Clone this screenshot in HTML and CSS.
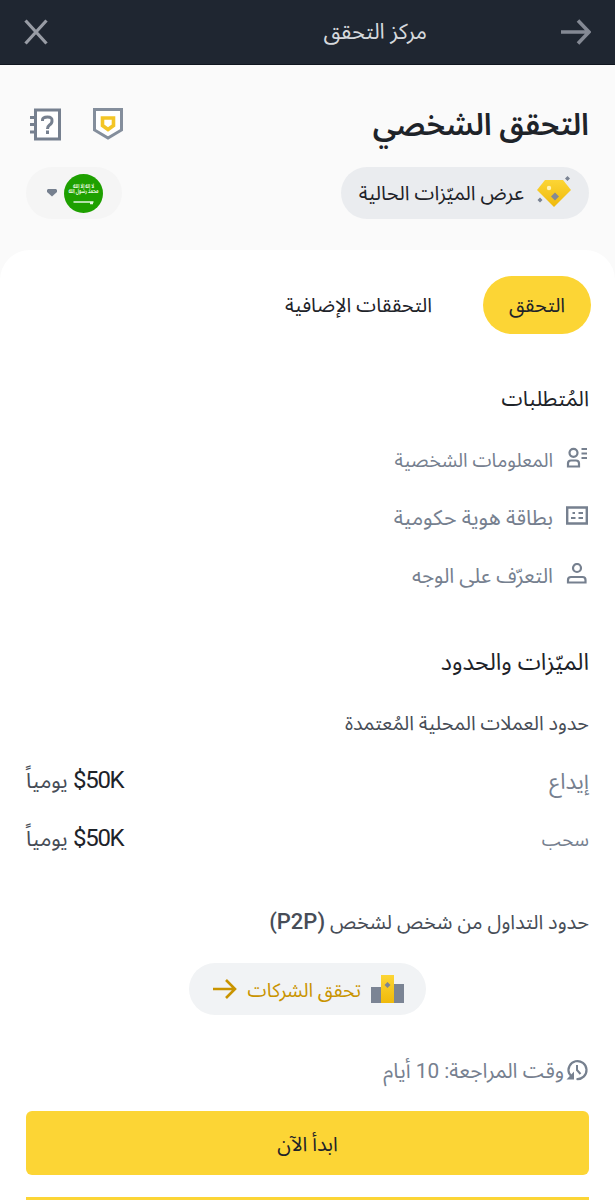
FILE: index.html
```
<!DOCTYPE html>
<html lang="ar" dir="rtl">
<head>
    <meta charset="UTF-8">
    <meta name="viewport" content="width=device-width, initial-scale=1.0">
    <title>مركز التحقق</title>
    <link rel="stylesheet" href="styles.css">
</head>
<body>
    <header class="topbar">
        <svg class="back" width="30" height="28" viewBox="0 0 30 28">
            <path d="M0 14H27M17 2.500L28 14L17 25.500" fill="none" stroke="#848994" stroke-width="3.600"/>
        </svg>
        <h1>مركز التحقق</h1>
        <svg class="close" width="24" height="28" viewBox="0 0 24 28">
            <path d="M1.500 2.500L22.500 25.500M22.500 2.500L1.500 25.500" fill="none" stroke="#989ca5" stroke-width="3.200"/>
        </svg>
    </header>
    <section class="intro">
        <div class="intro-row">
            <h2>التحقق الشخصي</h2>
            <div class="intro-icons">
                <svg width="30" height="32" viewBox="0 0 30 32">
                    <path d="M1.500 1.500H28.500V22L15 30L1.500 22Z" fill="#fff" stroke="#848e9c" stroke-width="3"/>
                    <path d="M9.500 10H20.500V17.500L15 21.500L9.500 17.500Z" fill="#fff" stroke="#f3c526" stroke-width="3.600"/>
                </svg>
                <svg width="31" height="33" viewBox="0 0 31 33">
                    <path d="M5.500 2H29.500V31H5.500Z" fill="#fff" stroke="#76808f" stroke-width="3"/>
                    <path d="M0 9.500H5M0 16.500H5M0 24H5" stroke="#76808f" stroke-width="3"/>
                    <path d="M12.500 13V12Q12.500 9 17.500 9T22 13Q22 15.500 19.500 17Q17.500 18.500 17.500 21M17.500 22.500V26" fill="none" stroke="#76808f" stroke-width="3"/>
                </svg>
            </div>
        </div>
        <div class="intro-row">
            <div class="pill benefits">
                <svg width="36" height="34" viewBox="0 0 36 34">
                    <defs>
                        <linearGradient id="gold" x1="0" y1="0" x2="0" y2="1">
                            <stop offset="0" stop-color="#fcd535"/>
                            <stop offset="1" stop-color="#efb90b"/>
                        </linearGradient>
                    </defs>
                    <path d="M9 4H27L35 14L18 31L1 14Z" fill="url(#gold)"/>
                    <path d="M19 16.500L23 20.500L19 24.500L15 20.500Z" fill="#848994"/>
                    <path d="M31.500 0L34 2.500L31.500 5L29 2.500ZM4 21.500L6.500 24L4 26.500L1.500 24Z" fill="#7b8494"/>
                    <circle cx="13" cy="12" r="2.200" fill="#fff3b5"/>
                </svg>
                <span>عرض الميّزات الحالية</span>
            </div>
            <div class="pill country">
                <svg width="39" height="39" viewBox="0 0 39 39">
                    <circle cx="19.500" cy="19.500" r="19.500" fill="#1ea000"/>
                    <g transform="translate(19.500 0) scale(.72 1)">
                        <text class="flag-text" x="0" y="14.500" text-anchor="middle">لا إله إلا الله</text>
                        <text class="flag-text" x="0" y="19" text-anchor="middle">محمد رسول الله</text>
                    </g>
                    <path d="M9.500 28H29.500M26 29.500H29" stroke="#e3f5df" stroke-width="1.300"/>
                </svg>
                <svg width="10" height="8" viewBox="0 0 10 8">
                    <path d="M0 1L1 0H9L10 1V3L5 7.500L0 3Z" fill="#76808f"/>
                </svg>
            </div>
        </div>
    </section>
    <main class="sheet">
        <nav class="tabs">
            <span class="tab active">التحقق</span>
            <span class="tab">التحققات الإضافية</span>
        </nav>
        <h3 class="req-title">المُتطلبات</h3>
        <ul class="requirements">
            <li>
                <svg width="22" height="22" viewBox="0 0 22 22">
                    <path d="M2 19.500V16.500Q2 13.500 5 13.500H10Q13 13.500 13 16.500V19.500Z" fill="none" stroke="#76808f" stroke-width="2.200"/>
                    <circle cx="7.500" cy="5.800" r="4" fill="none" stroke="#76808f" stroke-width="2.200"/>
                    <path d="M15.500 2H21M15.500 6.500H21M15.500 11H21" stroke="#76808f" stroke-width="2"/>
                </svg>
                <span class="req-info">المعلومات الشخصية</span>
            </li>
            <li>
                <svg width="22" height="22" viewBox="0 0 22 22">
                    <path d="M1.200 2.500H20.800V18.500H1.200Z" fill="none" stroke="#76808f" stroke-width="2.400"/>
                    <path d="M6.500 8H9M12.500 8H17M5 13H9.500M12.500 13H17" stroke="#76808f" stroke-width="2"/>
                </svg>
                <span class="req-id">بطاقة هوية حكومية</span>
            </li>
            <li>
                <svg width="22" height="22" viewBox="0 0 22 22">
                    <path d="M2 19.500V17Q2 14 5 14H16.500Q19.500 14 19.500 17V19.500Z" fill="none" stroke="#76808f" stroke-width="2.200"/>
                    <circle cx="11" cy="5" r="4" fill="none" stroke="#76808f" stroke-width="2.200"/>
                </svg>
                <span class="req-face">التعرّف على الوجه</span>
            </li>
        </ul>
        <h3 class="limits-title">الميّزات والحدود</h3>
        <h4 class="fiat">حدود العملات المحلية المُعتمدة</h4>
        <div class="limit">
            <span class="limit-name">إيداع</span>
            <span class="limit-value"><b dir="ltr">$50K</b> يومياً</span>
        </div>
        <div class="limit">
            <span class="limit-name withdraw">سحب</span>
            <span class="limit-value"><b dir="ltr">$50K</b> يومياً</span>
        </div>
        <h4 class="p2p">حدود التداول من شخص لشخص <b dir="ltr">(P2P)</b></h4>
        <div class="pill company">
            <svg width="33" height="29" viewBox="0 0 33 29">
                <path d="M0 12H11V28H0ZM22 9H33V28H22Z" fill="#7b8494"/>
                <path d="M10 0H23V28H10Z" fill="url(#gold)"/>
                <path d="M16.500 7L19.500 10L16.500 13L13.500 10Z" fill="#7b8494"/>
            </svg>
            <span>تحقق الشركات</span>
            <svg width="24" height="20" viewBox="0 0 24 20">
                <path d="M0 10H22M13 1L22 10L13 19" fill="none" stroke="#c99400" stroke-width="2.600"/>
            </svg>
        </div>
        <div class="review">
            <svg width="22" height="22" viewBox="0 0 22 22">
                <path d="M10.500 20A9 9 0 1 0 3.200 14.500L6 18" fill="none" stroke="#76808f" stroke-width="2.200"/>
                <path d="M8 12.500V20.500H0.500Z" fill="#76808f"/>
                <path d="M11 6V11L14.500 15" fill="none" stroke="#76808f" stroke-width="2"/>
            </svg>
            <span>وقت المراجعة: 10 أيام</span>
        </div>
        <button class="start"><span>ابدأ الآن</span></button>
        <div class="next"></div>
    </main>
</body>
</html>
```

FILE: styles.css
```
* {
    box-sizing: border-box;
    margin: 0;
    padding: 0;
}
body {
    height: 1200px;
    overflow: hidden;
    background-color: #fafafa;
    color: #1e2329;
    font-family: Roboto, "Noto Sans Arabic", "Noto Sans", sans-serif;
    font-size: 20px;
}
h1, h2, h3, h4 {
    font-weight: normal;
}
svg {
    display: block;
    flex-shrink: 0;
}
span, h1, h2, h3, h4 {
    white-space: nowrap;
}
.topbar {
    display: flex;
    align-items: center;
    height: 65px;
    padding: 0 24px;
    background-color: #1f2631;
    border-bottom: 1px solid #10161f;
}
.topbar h1 {
    margin-right: 134px;
    font-size: 21.8px;
    color: #d5d8dc;
}
.close {
    margin-right: auto;
}
.intro {
    height: 185px;
    padding: 35px 26px 0;
}
.intro-row {
    display: flex;
    align-items: center;
    justify-content: space-between;
    height: 48px;
}
.intro-row + .intro-row {
    height: 52px;
    margin-top: 19px;
}
.intro h2 {
    padding-top: 2px;
    font-size: 30.5px;
    font-weight: 600;
}
.intro-icons {
    display: flex;
    align-items: center;
    gap: 32px;
    padding-left: 4px;
}
.pill {
    display: flex;
    align-items: center;
    height: 52px;
    border-radius: 26px;
}
.pill span {
    padding-top: 2px;
}
.benefits {
    width: 248px;
    padding-right: 17px;
    gap: 12px;
    background-color: #eaecef;
}
.country {
    width: 96px;
    padding-right: 19px;
    gap: 7px;
    background-color: #f5f5f5;
}
.flag-text {
    font-size: 6px;
    font-weight: bold;
    fill: #e3f5df;
}
.sheet {
    height: 950px;
    padding: 26px 26px 0;
    background-color: #fff;
    border-radius: 30px 30px 0 0;
}
.tabs {
    display: flex;
    align-items: center;
    gap: 51px;
    height: 58px;
    margin-right: -2px;
}
.tab {
    padding-top: 2px;
}
.tab.active {
    display: flex;
    align-items: center;
    justify-content: center;
    width: 108px;
    height: 58px;
    border-radius: 29px;
    background-color: #fcd535;
}
h3 {
    height: 36px;
    line-height: 36px;
    font-size: 21.4px;
}
.req-title {
    margin-top: 47px;
}
.requirements {
    margin-top: 12px;
    list-style: none;
    color: #76808f;
}
.requirements li {
    display: flex;
    align-items: center;
    gap: 13px;
    height: 58px;
    padding-right: 1px;
}
.requirements span {
    padding-top: 4px;
}
.req-info {
    font-size: 19.3px;
}
.req-id {
    font-size: 21.3px;
}
.req-face {
    font-size: 20.7px;
}
.limits-title {
    margin-top: 41px;
    font-size: 23.4px;
}
h4 {
    height: 30px;
    line-height: 30px;
    font-size: 19.8px;
    color: #474d57;
}
.fiat {
    margin: 29px 0 12px;
}
.limit {
    display: flex;
    align-items: center;
    justify-content: space-between;
    height: 58px;
}
.limit-name {
    padding-top: 3px;
    font-size: 22px;
    color: #76808f;
}
.limit-name.withdraw {
    font-size: 18.8px;
}
.limit-value {
    padding-top: 2px;
    font-size: 21.3px;
    color: #474d57;
}
.limit-value b {
    font-size: 24px;
    font-weight: normal;
    letter-spacing: -1.3px;
    color: #1e2329;
}
.p2p {
    margin-top: 40px;
    font-size: 20px;
}
.p2p b {
    font-size: 22px;
    font-weight: 500;
}
.company {
    width: 237px;
    margin: 26px auto 0;
    padding-right: 22px;
    gap: 10px;
    background-color: #f1f3f5;
    color: #c99400;
    font-size: 19.3px;
}
.review {
    display: flex;
    align-items: center;
    gap: 2px;
    height: 30px;
    margin: 40px 0 26px;
    padding-right: 1px;
    color: #76808f;
    font-size: 20.8px;
}
.review span {
    padding-top: 2px;
}
.start {
    display: block;
    width: 100%;
    height: 64px;
    margin-bottom: 22px;
    padding-top: 4px;
    border: none;
    border-radius: 6px;
    background-color: #fcd535;
    color: #1e2329;
    font-family: inherit;
    font-size: 20px;
}
.next {
    height: 4px;
    background-color: #fcd535;
}
```
